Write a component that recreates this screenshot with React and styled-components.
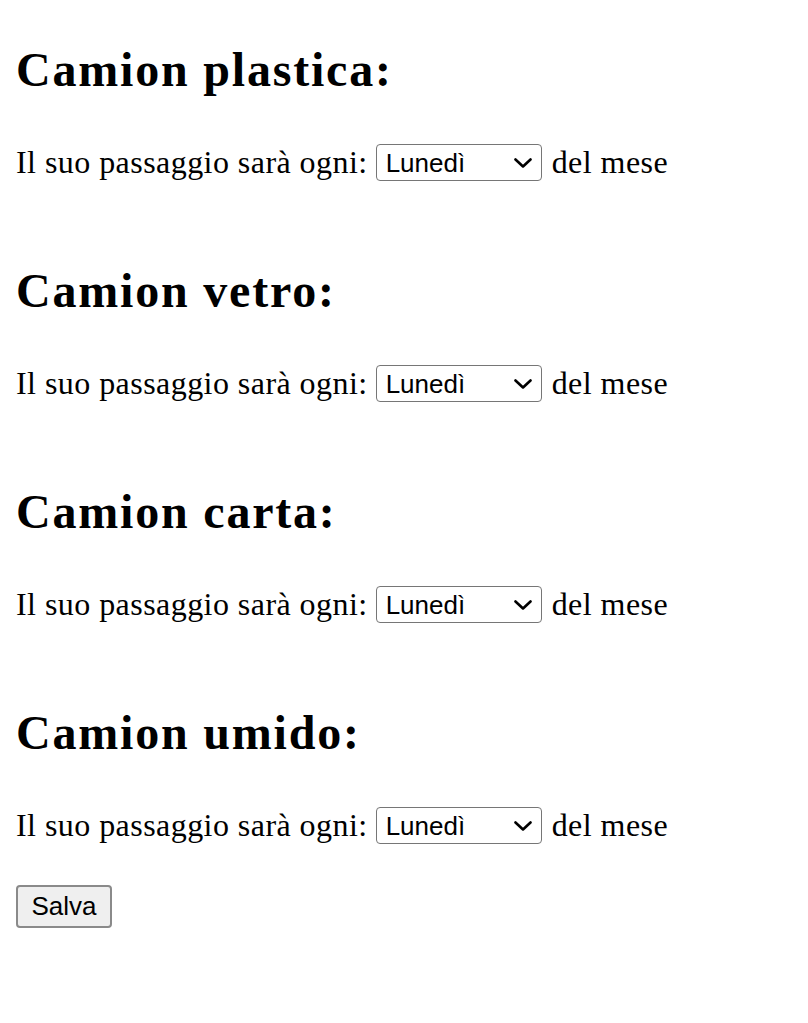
import React from "react";
import styled, { createGlobalStyle } from "styled-components";

const Global = createGlobalStyle`
  html, body { margin: 0; padding: 0; background: #ffffff; }
  body { font-family: "Liberation Serif", "Times New Roman", serif; color: #000; }
`;

const Page = styled.form`
  display: flex;
  flex-direction: column;
  align-items: flex-start;
  gap: 82px;
  padding: 42px 16px 0;
`;

const Section = styled.section`
  display: flex;
  flex-direction: column;
  gap: 46px;
`;

const Heading = styled.h2`
  margin: 0;
  font-size: 48px;
  line-height: 56px;
  font-weight: 700;
  letter-spacing: 1.8px;
`;

const Line = styled.div`
  display: flex;
  align-items: center;
  gap: 8px;
  height: 37px;
  font-size: 32px;
  line-height: 37px;
  letter-spacing: 0.45px;
  white-space: nowrap;
`;

const SelectWrap = styled.span`
  position: relative;
  display: inline-flex;
  margin-right: 2px;
`;

const Select = styled.select`
  appearance: none;
  -webkit-appearance: none;
  width: 166px;
  height: 37px;
  box-sizing: border-box;
  margin: 0;
  padding: 0 0 0 9px;
  border: 1px solid #767676;
  border-radius: 4px;
  background: #fff;
  color: #000;
  font-family: "Liberation Sans", Arial, sans-serif;
  font-size: 26px;
  letter-spacing: 0;
`;

const Chevron = styled.svg`
  position: absolute;
  right: 10px;
  top: 14px;
  width: 18px;
  height: 10px;
  pointer-events: none;
`;

const Button = styled.button`
  margin-top: -41px;
  width: 96px;
  height: 43px;
  box-sizing: border-box;
  padding: 0 12px;
  border: 2px solid #8a8a8a;
  border-radius: 4px;
  background: #efefef;
  color: #000;
  font-family: "Liberation Sans", Arial, sans-serif;
  font-size: 26px;
`;

const trucks = ["Camion plastica:", "Camion vetro:", "Camion carta:", "Camion umido:"];
const days = ["Lunedì", "Martedì", "Mercoledì", "Giovedì", "Venerdì", "Sabato", "Domenica"];

function DaySelect() {
  return (
    <SelectWrap>
      <Select defaultValue="Lunedì">
        {days.map((d) => (
          <option key={d} value={d}>{d}</option>
        ))}
      </Select>
      <Chevron viewBox="0 0 18 10" aria-hidden="true">
        <path d="M1.5 1.5 L9 8.5 L16.5 1.5" fill="none" stroke="#000" strokeWidth="2.6" strokeLinecap="round" strokeLinejoin="round" />
      </Chevron>
    </SelectWrap>
  );
}

export default function App() {
  return (
    <>
      <Global />
      <Page onSubmit={(e) => e.preventDefault()}>
        {trucks.map((t) => (
          <Section key={t}>
            <Heading>{t}</Heading>
            <Line>
              <span>Il suo passaggio sarà ogni:</span>
              <DaySelect />
              <span>del mese</span>
            </Line>
          </Section>
        ))}
        <Button type="submit">Salva</Button>
      </Page>
    </>
  );
}
